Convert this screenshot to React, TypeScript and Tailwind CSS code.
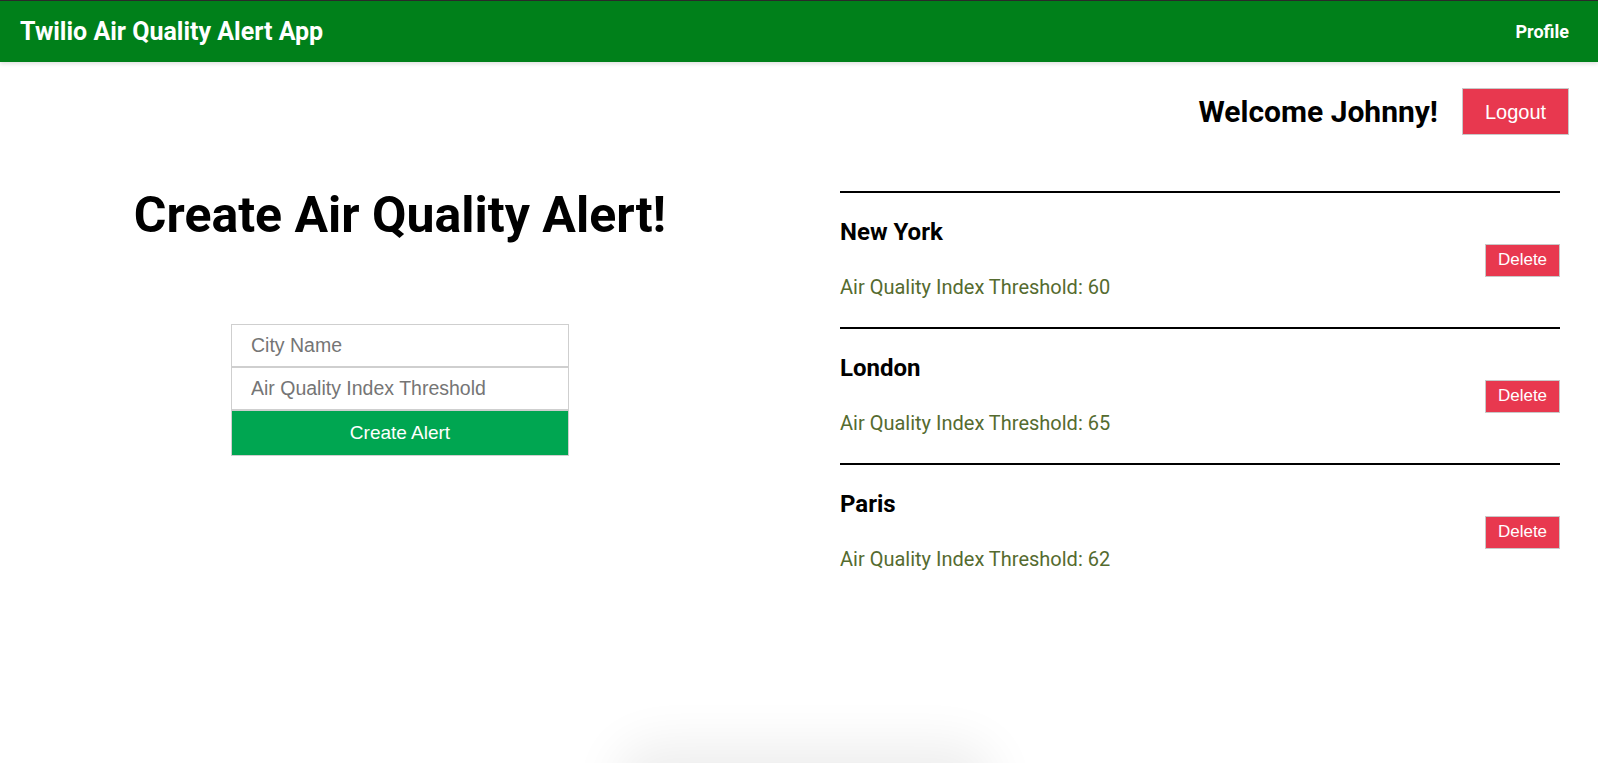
const alerts = [
  { city: "New York", threshold: 60 },
  { city: "London", threshold: 65 },
  { city: "Paris", threshold: 62 },
];

const App = () => {
  return (
    <div className="relative min-h-[763px] overflow-hidden bg-white font-['Roboto',sans-serif] text-black">
      <div className="h-px bg-[#2b2b2b]" />
      <nav className="flex h-[61px] items-center justify-between bg-[#00801a] px-5 shadow-[0_2px_4px_rgba(0,0,0,0.12)]">
        <span className="text-[25px] font-bold text-white">Twilio Air Quality Alert App</span>
        <a href="#" className="pr-[9px] text-[18px] font-bold text-white">
          Profile
        </a>
      </nav>

      <div className="flex items-center justify-end gap-6 pr-[29px] pt-[26px]">
        <h2 className="text-[30px] font-bold">Welcome Johnny!</h2>
        <button className="h-[47px] w-[107px] border border-[#c8c8c8] bg-[#e8384f] font-['Liberation_Sans',sans-serif] text-[20px] text-white">
          Logout
        </button>
      </div>

      <div className="grid grid-cols-[800px_1fr] pt-[50px]">
        <div className="flex flex-col items-center">
          <h1 className="text-[50px] font-bold leading-[60px]">Create Air Quality Alert!</h1>
          <form className="mt-[79px] flex w-[338px] flex-col font-['Liberation_Sans',sans-serif] text-[19.5px]">
            <input
              placeholder="City Name"
              className="h-[43px] border border-[#cfcfcf] px-[19px] placeholder:text-[#757575]"
            />
            <input
              placeholder="Air Quality Index Threshold"
              className="h-[43px] border border-[#cfcfcf] px-[19px] placeholder:text-[#757575]"
            />
            <button
              type="button"
              className="h-[46px] border border-[#cfcfcf] bg-[#00a651] text-[19px] text-white"
            >
              Create Alert
            </button>
          </form>
        </div>

        <div className="mr-[38px] ml-[40px] pt-[6px]">
          {alerts.map((a) => (
            <div key={a.city} className="flex h-[136px] items-center justify-between border-t-2 border-black">
              <div className="flex flex-col gap-[29px] pb-[3px]">
                <h3 className="text-[24px] font-bold leading-[28px]">{a.city}</h3>
                <p className="text-[20px] leading-[24px] text-[#556b2f]">
                  Air Quality Index Threshold: {a.threshold}
                </p>
              </div>
              <button className="h-[33px] w-[75px] border border-[#c8c8c8] bg-[#e8384f] font-['Liberation_Sans',sans-serif] text-[17px] text-white">
                Delete
              </button>
            </div>
          ))}
        </div>
      </div>

      <div className="pointer-events-none fixed bottom-[-40px] left-[635px] h-[40px] w-[340px] rounded-full shadow-[0_0_50px_20px_rgba(0,0,0,0.07)]" />
    </div>
  );
};

export default App;
